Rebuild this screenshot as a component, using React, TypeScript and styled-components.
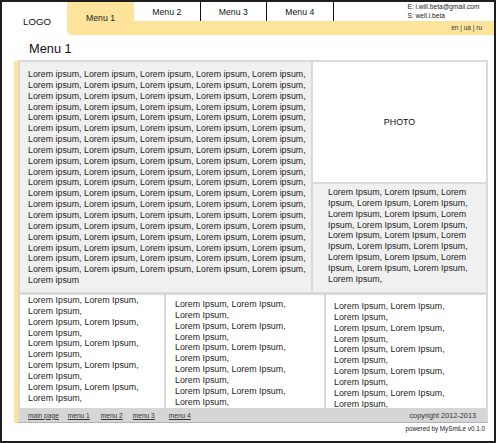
import React from "react";
import styled, { createGlobalStyle } from "styled-components";

const YELLOW = "#fee39b";

const Global = createGlobalStyle`
  html, body { margin: 0; padding: 0; background: #fff; }
  body { font-family: "Liberation Sans", Arial, sans-serif; color: #222; }
  * { box-sizing: border-box; }
`;

const Frame = styled.div`
  width: 496px;
  height: 443px;
  border: 2px solid #1e1e1e;
  background: #fff;
  display: flex;
  flex-direction: column;
`;

const Header = styled.header`
  display: flex;
  height: 33px;
`;

const Logo = styled.div`
  width: 65px;
  padding: 14px 0 0 21px;
  font-size: 9.7px;
  line-height: 12px;
  color: #111;
`;

const ActiveTab = styled.div`
  width: 67px;
  background: ${YELLOW};
  border-bottom-left-radius: 5px;
  display: flex;
  align-items: center;
  justify-content: center;
  padding-bottom: 2px;
  font-size: 8.7px;
  color: #222;
`;

const NavArea = styled.div`
  flex: 1;
  display: flex;
  flex-direction: column;
`;

const NavTop = styled.div`
  display: flex;
  height: 19px;
`;

const MenuItem = styled.div`
  width: 66.5px;
  border-right: 1px solid #111;
  text-align: center;
  font-size: 8.7px;
  line-height: 17px;
  padding-top: 2px;
  color: #111;
`;

const Contact = styled.div`
  flex: 1;
  padding: 1px 0 0 74px;
  font-size: 6.6px;
  line-height: 8.7px;
  color: #222;
`;

const LangBand = styled.div`
  height: 14px;
  background: ${YELLOW};
  text-align: right;
  padding-right: 12px;
  font-size: 6.5px;
  line-height: 14px;
  color: #333;
`;

const Heading = styled.h1`
  margin: 6px 0 0 27px;
  font-size: 12.8px;
  line-height: 16px;
  font-weight: normal;
  color: #111;
`;

const Main = styled.div`
  display: flex;
  margin: 3px 6px 0 12px;
`;

const SideMark = styled.div`
  width: 4px;
  background: ${YELLOW};
  margin: 1px 0 -1px 0;
`;

const Box = styled.div`
  flex: 1;
  border: 2px solid #dadada;
  border-bottom: none;
  background: #d9d9d9;
  display: flex;
  flex-direction: column;
  box-shadow: 0 1px 0 #b2b2b2;
`;

const TopRow = styled.div`
  display: grid;
  grid-template-columns: 291px 173px;
  column-gap: 2px;
  height: 230px;
`;

const TextBlock = styled.div`
  font-size: 8.85px;
  line-height: 10.85px;
  color: #1c1c1c;
`;

const LeftPanel = styled(TextBlock)`
  background: #f0f0f0;
  padding: 7px 0 0 8px;
  overflow: hidden;
`;

const RightCol = styled.div`
  display: grid;
  grid-template-rows: 120px 1fr;
  row-gap: 2px;
`;

const Photo = styled.div`
  background: #fff;
  display: flex;
  align-items: center;
  justify-content: center;
  font-size: 8.85px;
  color: #111;
`;

const SidePanel = styled(TextBlock)`
  background: #f0f0f0;
  padding: 3px 8px 0 15px;
`;

const BottomRow = styled.div`
  margin-top: 3px;
  display: grid;
  grid-template-columns: 144px 158px 160px;
  column-gap: 2px;
  height: 113px;
`;

const Col = styled(TextBlock)<{ $top: number; $left: number }>`
  background: #fff;
  overflow: hidden;
  padding: ${(p) => p.$top}px 0 0 ${(p) => p.$left}px;
`;

const Footer = styled.div`
  height: 14px;
  background: #d6d6d6;
  display: flex;
  align-items: center;
  padding: 0 10px 0 8px;
`;

const FootLink = styled.a<{ $gap: number }>`
  margin-left: ${(p) => p.$gap}px;
  font-size: 6.6px;
  line-height: 9px;
  color: #333;
  text-decoration: underline;
  white-space: nowrap;
`;

const Copyright = styled.span`
  margin-left: auto;
  font-size: 7.3px;
  line-height: 9px;
  color: #333;
  white-space: nowrap;
`;

const Powered = styled.div`
  margin-top: 2px;
  padding-right: 9px;
  text-align: right;
  font-size: 6.3px;
  line-height: 10px;
  color: #222;
  white-space: nowrap;
`;

const leftText =
  Array(95).fill("Lorem ipsum,").join(" ") + " Lorem ipsum";
const sideText = Array(21).fill("Lorem Ipsum,").join(" ");

const Pairs: React.FC<{ count: number }> = ({ count }) => (
  <>
    {Array.from({ length: count }).map((_, i) => (
      <React.Fragment key={i}>
        Lorem Ipsum, Lorem Ipsum,
        <br />
        Lorem Ipsum,
        <br />
      </React.Fragment>
    ))}
  </>
);

const links: { label: string; gap: number }[] = [
  { label: "main page", gap: 0 },
  { label: "menu 1", gap: 9 },
  { label: "menu 2", gap: 11 },
  { label: "menu 3", gap: 10 },
  { label: "menu 4", gap: 14 },
];

export default function App() {
  return (
    <>
      <Global />
      <Frame>
        <Header>
          <Logo>LOGO</Logo>
          <ActiveTab>Menu 1</ActiveTab>
          <NavArea>
            <NavTop>
              <MenuItem>Menu 2</MenuItem>
              <MenuItem>Menu 3</MenuItem>
              <MenuItem>Menu 4</MenuItem>
              <Contact>
                E: i.will.beta@gmail.com
                <br />
                S: well.i.beta
              </Contact>
            </NavTop>
            <LangBand>en | ua | ru</LangBand>
          </NavArea>
        </Header>
        <Heading>Menu 1</Heading>
        <Main>
          <SideMark />
          <Box>
            <TopRow>
              <LeftPanel>{leftText}</LeftPanel>
              <RightCol>
                <Photo>PHOTO</Photo>
                <SidePanel>{sideText}</SidePanel>
              </RightCol>
            </TopRow>
            <BottomRow>
              <Col $top={0} $left={8}>
                <Pairs count={5} />
              </Col>
              <Col $top={4} $left={9}>
                <Pairs count={5} />
              </Col>
              <Col $top={6} $left={8}>
                <Pairs count={5} />
              </Col>
            </BottomRow>
            <Footer>
              {links.map((l) => (
                <FootLink key={l.label} href="#" $gap={l.gap}>
                  {l.label}
                </FootLink>
              ))}
              <Copyright>copyright 2012-2013</Copyright>
            </Footer>
          </Box>
        </Main>
        <Powered>powered by MySmiLe v0.1.0</Powered>
      </Frame>
    </>
  );
}
